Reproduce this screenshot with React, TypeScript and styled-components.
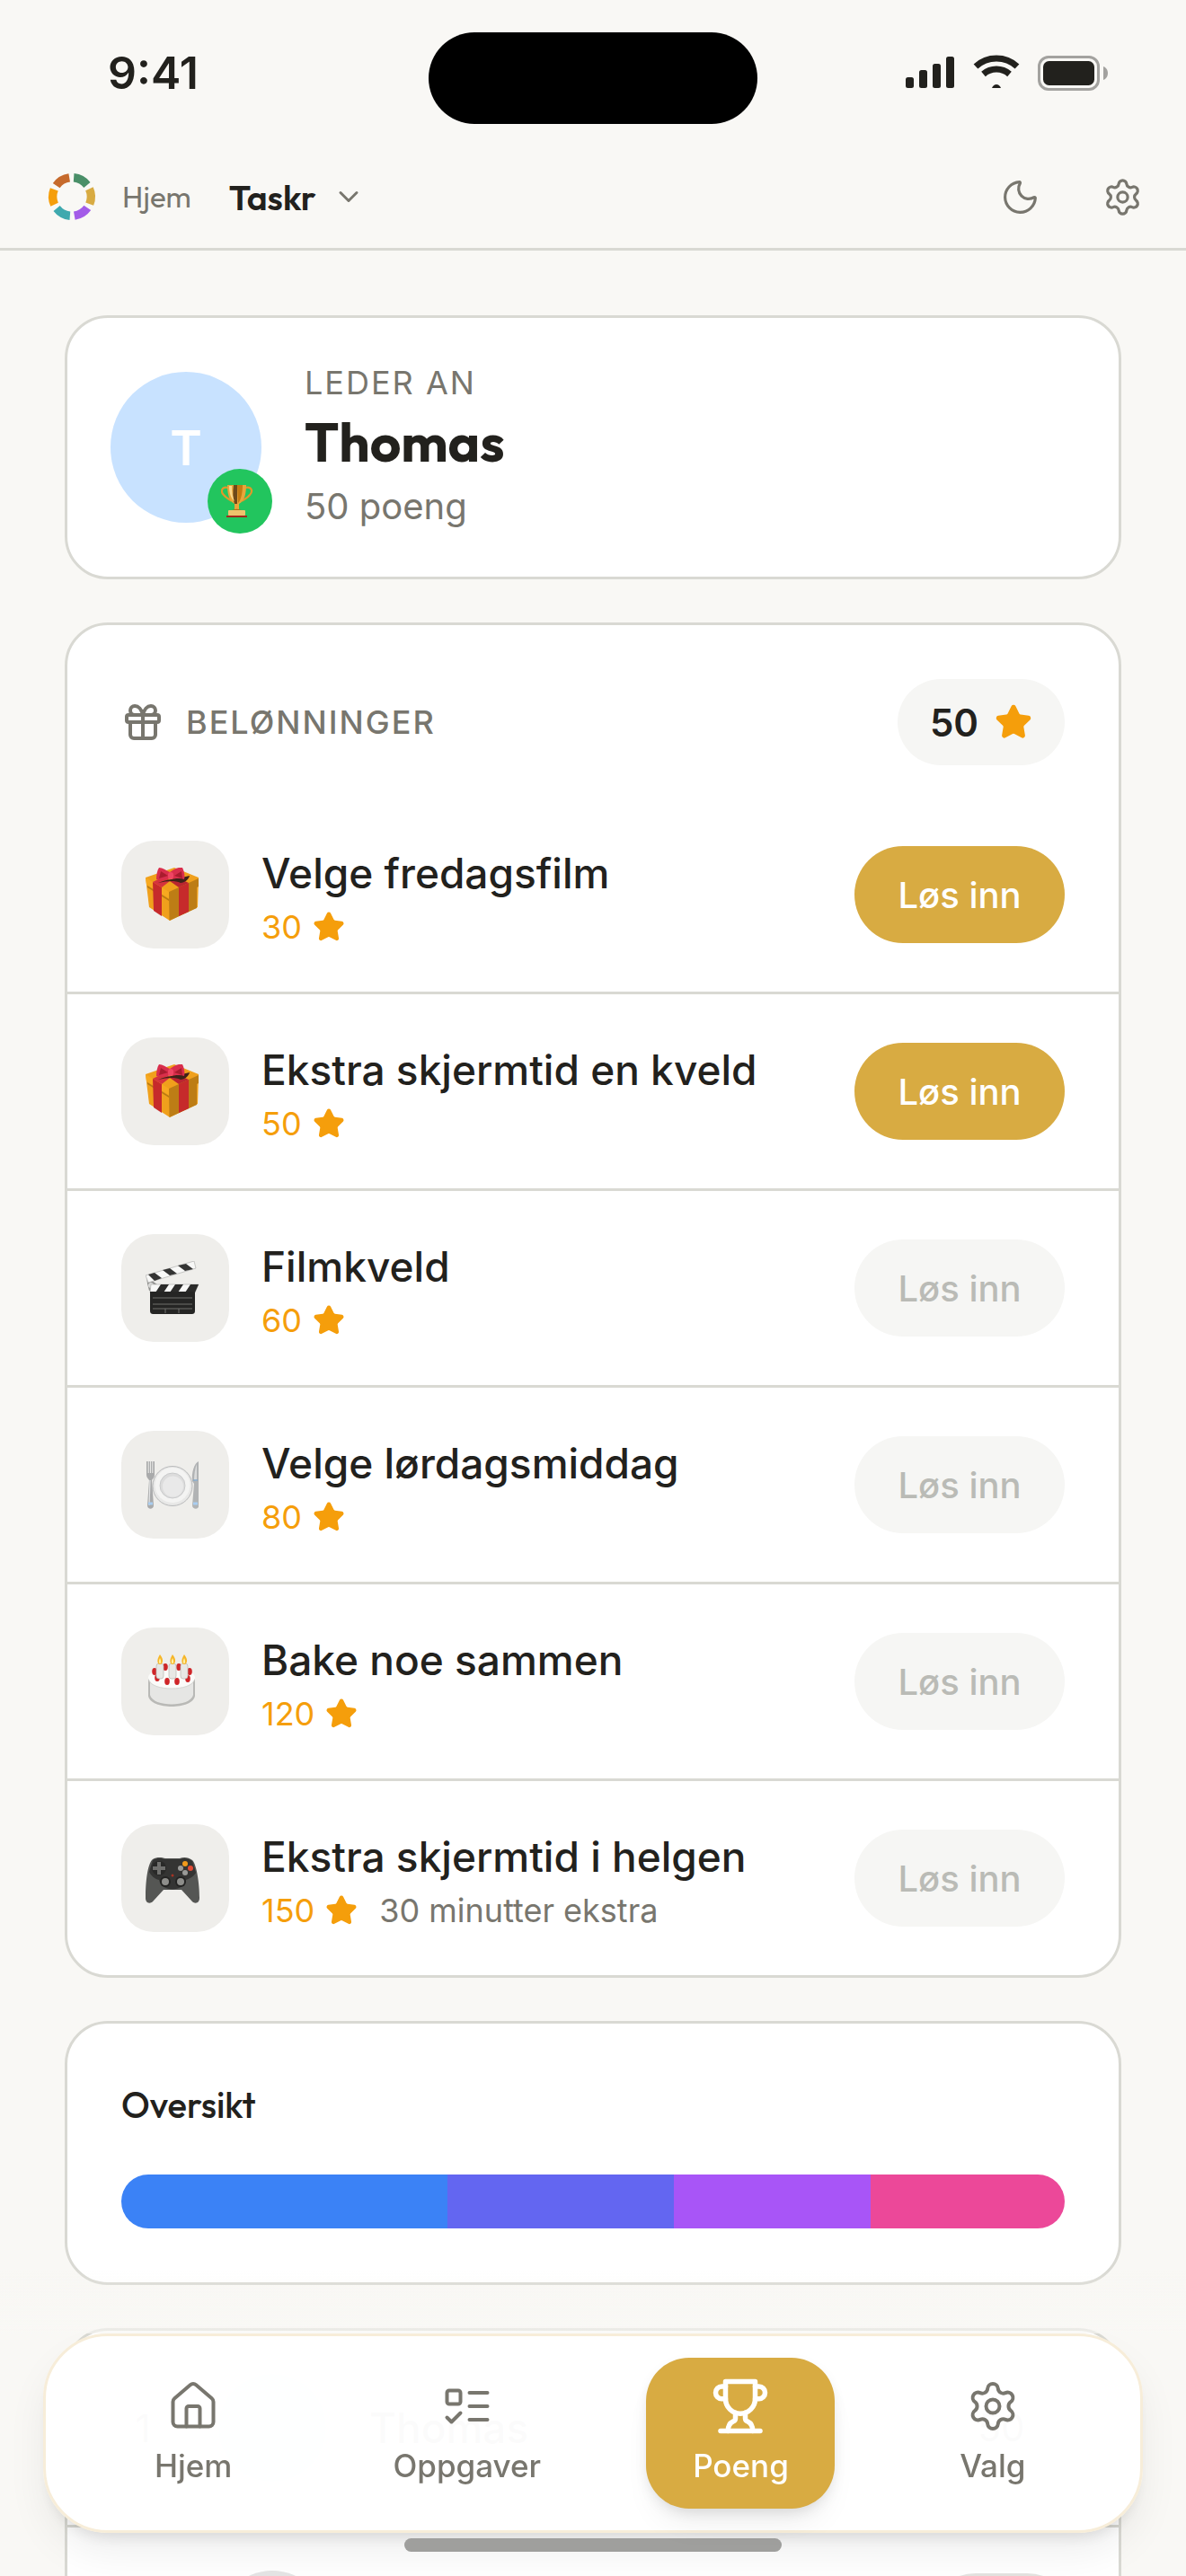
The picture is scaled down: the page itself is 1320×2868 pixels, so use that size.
import { useState } from 'react';
import styled, { createGlobalStyle } from 'styled-components';
import { ChevronDown, Gift, House, Moon, Settings, Star } from 'lucide-react';

const GlobalStyle = createGlobalStyle`
  * {
    box-sizing: border-box;
  }
  body {
    margin: 0;
    background: #f9f8f5;
    color: #22211d;
    font-family: Inter, 'Liberation Sans', sans-serif;
  }
  button {
    border: 0;
    padding: 0;
    background: none;
    color: inherit;
    font: inherit;
    cursor: pointer;
  }
  h1, h2, h3, p, ul {
    margin: 0;
    padding: 0;
  }
  svg {
    display: block;
    flex: none;
  }
`;

const Shell = styled.div`
  height: 100vh;
  display: flex;
  flex-direction: column;
  overflow: hidden;
`;

const StatusBar = styled.div`
  flex: none;
  display: grid;
  grid-template-columns: 1fr auto 1fr;
  align-items: center;
  height: 162px;
  padding: 0 84px 0 120px;
`;

const Clock = styled.time`
  font-size: 50px;
  font-weight: 600;
  line-height: 60px;
`;

const Island = styled.div`
  width: 366px;
  height: 102px;
  margin: 12px 36px 0 0;
  border-radius: 51px;
  background: #000;
`;

const StatusIcons = styled.div`
  justify-self: end;
`;

const Header = styled.header`
  flex: none;
  display: flex;
  align-items: center;
  height: 117px;
  padding: 0 48px;
  border-bottom: 3px solid #d9d9d3;
`;

const HomeLink = styled.a`
  display: flex;
  align-items: center;
  gap: 24px;
  color: #78766e;
  font-family: Outfit, Lato, sans-serif;
  font-size: 33px;
  text-decoration: none;
`;

const FamilyButton = styled.button`
  display: flex;
  align-items: center;
  gap: 18px;
  margin-left: 42px;
  font-family: Outfit, Lato, sans-serif;
  font-size: 39px;
  font-weight: 600;

  svg {
    color: #78766e;
  }
`;

const HeaderActions = styled.div`
  display: flex;
  gap: 69px;
  margin-left: auto;
  color: #78766e;
`;

const Content = styled.main`
  flex: 1;
  min-height: 0;
  display: flex;
  flex-direction: column;
  gap: 48px;
  padding: 72px 72px 0;
  overflow-y: auto;
  scrollbar-width: none;
`;

const Card = styled.section`
  flex: none;
  border: 3px solid #d9d9d3;
  border-radius: 48px;
  background: #fff;
  overflow: hidden;
`;

const LeaderCard = styled(Card)`
  display: flex;
  align-items: center;
  gap: 48px;
  padding: 48px;
`;

const Avatar = styled.div<{ $size: number; $color: string }>`
  position: relative;
  flex: none;
  display: flex;
  align-items: center;
  justify-content: center;
  width: ${(props) => props.$size}px;
  height: ${(props) => props.$size}px;
  border-radius: 50%;
  background: ${(props) => props.$color};
  color: #fff;
  font-size: 54px;
  font-weight: 600;
`;

const TrophyBadge = styled.span`
  position: absolute;
  right: -12px;
  bottom: -12px;
  display: flex;
  align-items: center;
  justify-content: center;
  width: 72px;
  height: 72px;
  border-radius: 50%;
  background: #22c55e;
`;

const Eyebrow = styled.p`
  color: #78766e;
  font-size: 36px;
  line-height: 48px;
  letter-spacing: 2px;
  text-transform: uppercase;
`;

const LeaderName = styled.h1`
  font-family: Outfit, Lato, sans-serif;
  font-size: 60px;
  font-weight: 700;
  line-height: 84px;
`;

const LeaderPoints = styled.p`
  color: #78766e;
  font-size: 40px;
  line-height: 60px;
`;

const RewardsHeader = styled.div`
  display: flex;
  align-items: center;
  gap: 24px;
  padding: 60px 60px 36px;
  color: #78766e;
`;

const RewardsTitle = styled.h2`
  font-size: 36px;
  font-weight: 500;
  letter-spacing: 2px;
  text-transform: uppercase;
`;

const PointsPill = styled.div`
  display: flex;
  align-items: center;
  gap: 18px;
  height: 96px;
  margin-left: auto;
  padding: 0 36px;
  border-radius: 48px;
  background: #f6f6f4;
  color: #22211d;
  font-size: 42px;
  font-weight: 600;
`;

const RewardList = styled.ul`
  list-style: none;
`;

const RewardRow = styled.li`
  display: flex;
  align-items: center;
  gap: 36px;
  padding: 48px 60px;

  & + & {
    border-top: 3px solid #d9d9d3;
  }
`;

const Tile = styled.span`
  flex: none;
  display: flex;
  align-items: center;
  justify-content: center;
  width: 120px;
  height: 120px;
  border-radius: 36px;
  background: #efeeeb;
`;

const RewardText = styled.div`
  flex: 1;
  min-width: 0;
`;

const RewardName = styled.h3`
  font-size: 46px;
  font-weight: 500;
  line-height: 72px;
`;

const RewardMeta = styled.p`
  display: flex;
  align-items: center;
  height: 48px;
  font-size: 36px;
`;

const Cost = styled.span`
  display: flex;
  align-items: center;
  gap: 12px;
  color: #f59e0b;
`;

const Note = styled.span`
  margin-left: 24px;
  color: #78766e;
`;

const RedeemButton = styled.button`
  width: 234px;
  height: 108px;
  border-radius: 54px;
  background: #d8ab42;
  color: #fff;
  font-size: 40px;
  font-weight: 500;

  &:disabled {
    background: #f6f6f4;
    color: #babbb6;
    cursor: default;
  }
`;

const OverviewCard = styled(Card)`
  padding: 60px;
`;

const OverviewTitle = styled.h2`
  margin-bottom: 48px;
  font-family: Outfit, Lato, sans-serif;
  font-size: 40px;
  font-weight: 500;
  line-height: 60px;
`;

const Bar = styled.div`
  display: flex;
  height: 60px;
  border-radius: 30px;
  overflow: hidden;
`;

const RankRow = styled.div`
  display: flex;
  align-items: center;
  gap: 48px;
  height: 216px;
  padding: 0 45px 0 48px;

  & + & {
    height: 219px;
    border-top: 3px solid #d9d9d3;
  }
`;

const Rank = styled.span`
  width: 72px;
  font-size: 42px;
  text-align: center;
`;

const RankName = styled.span`
  flex: 1;
  font-size: 46px;
  font-weight: 500;
`;

const RankPoints = styled.span`
  width: 171px;
  height: 114px;
  border-radius: 57px;
  background: #e4e3e0;
  font-size: 42px;
  line-height: 114px;
  text-align: center;
`;

const Dock = styled.div`
  position: fixed;
  right: 0;
  bottom: 0;
  left: 0;
`;

const DockFade = styled.div`
  height: 72px;
  background: linear-gradient(rgba(249, 248, 245, 0), rgba(249, 248, 245, 0.65));
`;

const TabBar = styled.nav`
  display: flex;
  align-items: center;
  justify-content: space-around;
  height: 222px;
  margin: 0 48px;
  padding: 0 24px;
  border: 3px solid #f7edd9;
  border-radius: 72px;
  background: rgba(255, 255, 255, 0.985);
  box-shadow: 0 24px 48px -6px rgba(0, 0, 0, 0.08), 0 12px 18px -9px rgba(0, 0, 0, 0.12);
`;

const Tab = styled.a<{ $active: boolean }>`
  display: flex;
  flex-direction: column;
  align-items: center;
  justify-content: center;
  gap: 12px;
  min-width: ${(props) => (props.$active ? 210 : 200)}px;
  height: 168px;
  margin: ${(props) => (props.$active ? '0 -5px' : 0)};
  padding: 0 42px;
  border-radius: 48px;
  background: ${(props) => (props.$active ? '#d8ab42' : 'transparent')};
  box-shadow: ${(props) =>
    props.$active ? '0 24px 36px -12px rgba(0, 0, 0, 0.08), 0 6px 18px -6px rgba(0, 0, 0, 0.16)' : 'none'};
  color: ${(props) => (props.$active ? '#fff' : '#78766e')};
  font-size: 35px;
  font-weight: 500;
  line-height: 48px;
  text-decoration: none;
`;

const TabIcon = styled.span`
  display: flex;
  align-items: center;
  justify-content: center;
  width: 60px;
  height: 60px;
`;

const HomeIndicator = styled.div`
  width: 420px;
  height: 15px;
  margin: 6px auto 27px;
  border-radius: 8px;
  background: #9f9f9d;
`;

const SignalIcons = () => (
  <svg width="228" height="42" viewBox="0 0 228 42" fill="#22211d">
    <rect x="0" y="26" width="9" height="12" rx="2.5" />
    <rect x="15" y="18" width="9" height="20" rx="2.5" />
    <rect x="30" y="11" width="9" height="27" rx="2.5" />
    <rect x="45" y="3" width="9" height="35" rx="2.5" />
    <path d="M78 14a34 34 0 0 1 46 0M86.5 22.5a22 22 0 0 1 29 0" fill="none" stroke="#22211d" strokeWidth="7" />
    <path d="M96 38c1-2.700 3-4 5-4s4 1.300 5 4z" />
    <rect x="148.5" y="3.5" width="66" height="36" rx="10.5" fill="none" stroke="#a3a29f" strokeWidth="3" />
    <rect x="153" y="8" width="57" height="27" rx="6.5" />
    <path d="M220 14c3 1 5 4 5 7.500s-2 6.500-5 7.500z" fill="#a3a29f" />
  </svg>
);

const logoColors = ['#4a8f68', '#d8ab42', '#a35ce8', '#3fa9ae', '#f59e0b', '#c66a2c'];

const Logo = () => (
  <svg width="64" height="54" viewBox="-32 -27 64 54">
    {logoColors.map((color, i) => (
      <path
        key={color}
        d="M2.5 -25.9A26 26 0 0 1 20.5 -16L13.3 -10A16.6 16.6 0 0 0 1.8 -16.5Z"
        fill={color}
        transform={`rotate(${i * 60})`}
      />
    ))}
  </svg>
);

const TaskIcon = () => (
  <svg
    width="60"
    height="60"
    viewBox="0 0 24 24"
    fill="none"
    stroke="currentColor"
    strokeWidth="1.6"
    strokeLinecap="round"
    strokeLinejoin="round"
  >
    <rect x="3" y="5" width="6" height="6" rx="1" />
    <path d="m3 17 2 2 4-4M13 6h8M13 12h8M13 18h8" />
  </svg>
);

const TrophyIcon = () => (
  <svg
    width="66"
    height="66"
    viewBox="0 0 24 24"
    fill="none"
    stroke="currentColor"
    strokeWidth="2"
    strokeLinecap="round"
    strokeLinejoin="round"
  >
    <path d="M6 9H4.5a2.5 2.5 0 0 1 0-5H6M18 9h1.5a2.5 2.5 0 0 0 0-5H18M4 22h16" />
    <path d="M10 14.66V17c0 .55-.47.98-.97 1.21C7.85 18.75 7 20.24 7 22" />
    <path d="M14 14.66V17c0 .55.47.98.97 1.21C16.15 18.75 17 20.24 17 22" />
    <path d="M18 2H6v7a6 6 0 0 0 12 0V2Z" />
  </svg>
);

const TrophyEmoji = () => (
  <svg width="42" height="40" viewBox="0 0 42 40">
    <path d="M8 5C1 3-1 9 3 13c3 4 7 5 9 7M27 5c7-2 9 4 5 8-3 4-7 5-9 7" fill="none" stroke="#e0982a" strokeWidth="2.2" />
    <path d="M7 2h21c0 10-2 18-8 21v6h-5v-6C9 20 7 12 7 2z" fill="#e9a53a" />
    <path d="M14 2h4v21h-3c-2-6-2-14-1-21z" fill="#6e4a1a" />
    <path d="M18 2h6c0 9-2 17-5 20z" fill="#c47b12" />
    <path d="M9 3h3c0 7 1 13 3 17C11 17 9 11 9 3z" fill="#fbd98a" />
    <path d="M12 31c1-3 10-3 11 0z" fill="#b06f16" />
    <rect x="8" y="30" width="19" height="6" rx="1" fill="#efc36d" />
    <path d="M6 36h23v2H6z" fill="#a12a1d" />
  </svg>
);

const GiftEmoji = () => (
  <>
    <path d="M0 11 32 0l27 11-1 33-31 15L4 44z" fill="#f0a01c" />
    <path d="M26 27 59 12v9l-2 1v23L26.5 59z" fill="#bd7d15" />
    <path d="M0 11 26 27v7L1 19z" fill="#f7a920" />
    <path d="M2 20 26 35v2L2 22z" fill="#b97a12" />
    <path d="m8 16 10 6v32L9 48z" fill="#c62a2b" />
    <path d="m37 22 11-5v32l-11 5z" fill="#c62a2b" />
    <path d="M8 16 22 9l5 6-9 7z" fill="#d5333d" />
    <path d="m37 22-10-7 6-5 15 7z" fill="#b92530" />
    <path d="M14 17c8-4 24-5 35-8-1 5-7 8-10 8-7-3-15-2-25 0z" fill="#3f2219" />
    <path d="M15 0c4 0 8 3 12 5 4-3 9-6 14-5 2 4 3 9 2 13-5-2-10 0-15-1-5 1-10 2-16 1 0-5 1-10 3-13z" fill="#d92e4c" />
    <path d="m17 4 8 5-10 3zM40 4l-8 5 9 3z" fill="#a91c2e" />
    <rect x="25" y="5" width="6" height="8" rx="3" fill="#f04563" />
  </>
);

const ClapperEmoji = () => (
  <>
    <path d="m1 18 12 8v7H4l-2-8z" fill="#8d8d8b" />
    <circle cx="6" cy="27" r="3" fill="#d9d9d7" />
    <path d="M0 16 54 0l2 8L3 24z" fill="#f8f8f7" stroke="#b9b9b7" strokeWidth=".8" />
    <path d="m3 15 7-2 8 6-8 3zM19 10l8-2 8 6-8 2zM36 5l9-2 8 6-9 2z" fill="#343433" />
    <path d="M6 26h53l-4 9H5z" fill="#f8f8f7" stroke="#b9b9b7" strokeWidth=".8" />
    <path d="M17 26h9l-6 9h-9zM33 26h9l-6 9h-9zM50 26h9l-4 9H44z" fill="#2b2b2a" />
    <path d="M5 34h50v21c0 3-1 4-4 4H9c-3 0-4-1-4-4z" fill="#252524" />
    <path d="M8 41h44M8 48h44M8 53h44M22 53v5M37 53v5" stroke="#797977" strokeWidth=".9" />
  </>
);

const PlateEmoji = () => (
  <>
    <circle cx="30" cy="31.5" r="22" fill="#e8e8e7" stroke="#b9babb" />
    <circle cx="30" cy="30.5" r="19.5" fill="#f4f4f3" />
    <circle cx="30" cy="31" r="14" fill="#dcdcdc" stroke="#c3c4c5" strokeWidth=".8" />
    <circle cx="30.5" cy="32" r="11.5" fill="#e9e9e9" />
    <path d="M1 4v15c0 3 2 4 3 6L2 53c0 5 7 5 7 0L7 25c1-2 3-3 3-6V4" fill="#a9aaab" />
    <path d="M3.2 4v13M5.5 4v13M7.8 4v13" stroke="#e8e8e6" strokeWidth="1.1" />
    <path d="M5 25 4 53" stroke="#e3e4e5" strokeWidth="1.2" />
    <path d="M59 4c-5 2-8 13-7 22l2 3-2 24c0 5 8 5 7 0z" fill="#b1b3b4" />
    <path d="M57 7c-2 5-3 12-3 18l3 1z" fill="#dadbdb" />
    <path d="M53 25h5" stroke="#83a9cb" strokeWidth="1.5" />
    <path d="M3 51h5M53 51h5" stroke="#a9cdf0" strokeWidth="3" />
  </>
);

const CakeEmoji = () => (
  <>
    <path d="M3 27v19c2 16 50 16 52 0V27z" fill="#b9b9b6" />
    <path d="M5 30v15c3 14 45 14 48 0V30z" fill="#e6e6e4" />
    <ellipse cx="29" cy="26" rx="26" ry="12" fill="#fbfbf9" />
    <path d="M4 29c4 12 46 12 50 0" fill="none" stroke="#d6d6d3" />
    {[[10, 19], [22, 14], [37, 14], [49, 19], [13, 26], [24, 30], [35, 30], [47, 27]].map(([x, y]) => (
      <ellipse key={x} cx={x} cy={y} rx="2.8" ry="4" fill="#cf2528" />
    ))}
    {[16, 30, 43].map((x) => (
      <g key={x}>
        <rect x={x - 4} y="10" width="8" height="17" rx="3" fill="#e8e8e5" stroke="#b7b7b3" strokeWidth=".7" />
        <path d={`M${x} 0c5 6 3 11 0 11s-4-5 0-11z`} fill="#f6b629" />
        <path d={`M${x} 4c2 4 1 6 0 6s-2-2 0-6z`} fill="#fff0a0" />
      </g>
    ))}
  </>
);

const ControllerEmoji = () => (
  <>
    <path
      d="M8 9c5-3 10-2 14-1h16c5-2 10-1 14 2 5 5 8 26 8 42 0 7-6 7-9 3L40 43H20L9 55c-3 4-9 4-9-3C0 35 2 14 8 9z"
      fill="#555654"
    />
    <path d="M8 10c5-3 10-2 14-1h16c5-2 10-1 14 2l4 13c-3 5-8 7-11 8-3 14-27 14-30 0-5-1-9-5-11-9z" fill="#343433" />
    <circle cx="15" cy="19" r="8" fill="#292928" />
    <path d="M13 12h4v5h5v4h-5v5h-4v-5H8v-4h5z" fill="#70706e" />
    <circle cx="44" cy="14" r="3" fill="#f19a1b" />
    <circle cx="50" cy="19" r="3" fill="#e34b36" />
    <circle cx="39" cy="19" r="3" fill="#9a9a98" />
    <circle cx="44" cy="24" r="3" fill="#9a9a98" />
    <circle cx="30" cy="27" r="1.5" fill="#a53424" />
    <circle cx="22" cy="34" r="6" fill="#232322" />
    <circle cx="39" cy="34" r="6" fill="#232322" />
    <circle cx="22" cy="34" r="4" fill="#8e8e8b" />
    <circle cx="39" cy="34" r="4" fill="#8e8e8b" />
  </>
);

const rewards = [
  { id: 0, name: 'Velge fredagsfilm', cost: 30, Emoji: GiftEmoji },
  { id: 1, name: 'Ekstra skjermtid en kveld', cost: 50, Emoji: GiftEmoji },
  { id: 2, name: 'Filmkveld', cost: 60, Emoji: ClapperEmoji },
  { id: 3, name: 'Velge lørdagsmiddag', cost: 80, Emoji: PlateEmoji },
  { id: 4, name: 'Bake noe sammen', cost: 120, Emoji: CakeEmoji },
  { id: 5, name: 'Ekstra skjermtid i helgen', cost: 150, note: '30 minutter ekstra', Emoji: ControllerEmoji },
];

const segments = [
  { value: 363, color: '#3b82f6' },
  { value: 252, color: '#6366f1' },
  { value: 219, color: '#a855f7' },
  { value: 216, color: '#ec4899' },
];

const tabs = [
  { name: 'Hjem', icon: <House size={60} strokeWidth={1.6} /> },
  { name: 'Oppgaver', icon: <TaskIcon /> },
  { name: 'Poeng', icon: <TrophyIcon /> },
  { name: 'Valg', icon: <Settings size={60} strokeWidth={1.6} /> },
];

function App() {
  const [tab, setTab] = useState('Poeng');
  const points = 50;

  return (
    <Shell>
      <GlobalStyle />
      <StatusBar>
        <Clock>9:41</Clock>
        <Island />
        <StatusIcons>
          <SignalIcons />
        </StatusIcons>
      </StatusBar>

      <Header>
        <HomeLink href="#hjem">
          <Logo />
          Hjem
        </HomeLink>
        <FamilyButton type="button">
          Taskr
          <ChevronDown size={36} />
        </FamilyButton>
        <HeaderActions>
          <button type="button" aria-label="Mørk modus">
            <Moon size={45} strokeWidth={1.7} />
          </button>
          <button type="button" aria-label="Innstillinger">
            <Settings size={45} strokeWidth={1.7} />
          </button>
        </HeaderActions>
      </Header>

      <Content>
        <LeaderCard>
          <Avatar $size={168} $color="#c8e2ff">
            T
            <TrophyBadge>
              <TrophyEmoji />
            </TrophyBadge>
          </Avatar>
          <div>
            <Eyebrow>Leder an</Eyebrow>
            <LeaderName>Thomas</LeaderName>
            <LeaderPoints>{points} poeng</LeaderPoints>
          </div>
        </LeaderCard>

        <Card>
          <RewardsHeader>
            <Gift size={48} />
            <RewardsTitle>Belønninger</RewardsTitle>
            <PointsPill>
              {points}
              <Star size={42} color="#f59e0b" fill="#f59e0b" />
            </PointsPill>
          </RewardsHeader>
          <RewardList>
            {rewards.map(({ id, name, cost, note, Emoji }) => (
              <RewardRow key={id}>
                <Tile>
                  <svg width="66" height="60" viewBox="0 0 66 60">
                    <Emoji />
                  </svg>
                </Tile>
                <RewardText>
                  <RewardName>{name}</RewardName>
                  <RewardMeta>
                    <Cost>
                      {cost}
                      <Star size={36} fill="currentColor" />
                    </Cost>
                    {note && <Note>{note}</Note>}
                  </RewardMeta>
                </RewardText>
                <RedeemButton type="button" disabled={cost > points}>
                  Løs inn
                </RedeemButton>
              </RewardRow>
            ))}
          </RewardList>
        </Card>

        <OverviewCard>
          <OverviewTitle>Oversikt</OverviewTitle>
          <Bar>
            {segments.map((s) => (
              <div key={s.color} style={{ flexGrow: s.value, background: s.color }} />
            ))}
          </Bar>
        </OverviewCard>

        <Card>
          <RankRow>
            <Rank>1</Rank>
            <Avatar $size={120} $color="#c8e2ff" />
            <RankName>Thomas</RankName>
            <RankPoints>50</RankPoints>
          </RankRow>
          <RankRow>
            <Rank />
            <Avatar $size={120} $color="#e5e5e5" />
            <RankName />
            <RankPoints />
          </RankRow>
        </Card>
      </Content>

      <Dock>
        <DockFade />
        <TabBar>
          {tabs.map((t) => (
            <Tab key={t.name} href={`#${t.name.toLowerCase()}`} $active={tab === t.name} onClick={() => setTab(t.name)}>
              <TabIcon>{t.icon}</TabIcon>
              {t.name}
            </Tab>
          ))}
        </TabBar>
        <HomeIndicator />
      </Dock>
    </Shell>
  );
}

export default App;
